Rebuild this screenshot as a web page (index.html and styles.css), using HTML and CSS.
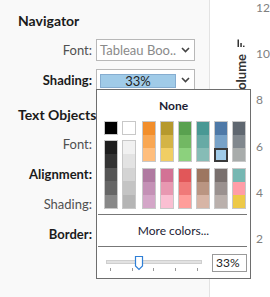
FILE: index.html
```html
<!DOCTYPE html>
<html lang="en">
<head>
    <meta charset="UTF-8">
    <title>Format Workbook</title>
    <link rel="stylesheet" href="styles.css">
</head>
<body>
    <div class="screen">
        <!-- Format pane -->
        <aside class="panel">
            <h2 class="heading">Navigator</h2>
            <div class="fields">
                <span class="label">Font:</span>
                <div class="select">
                    <span class="select-text">Tableau Boo..</span>
                    <svg class="chevron" width="9" height="6" viewBox="0 0 9 6"><polyline points="1,1 4.5,4.5 8,1" fill="none" stroke="#444" stroke-width="1.6"/></svg>
                </div>

                <span class="label strong">Shading:</span>
                <div class="select shading-select">
                    <span class="shade-bar">33%</span>
                    <svg class="chevron" width="9" height="6" viewBox="0 0 9 6"><polyline points="1,1 4.5,4.5 8,1" fill="none" stroke="#444" stroke-width="1.6"/></svg>

                    <!-- Color picker popup -->
                    <div class="color-popup">
                        <div class="none-option">None</div>

                        <div class="swatches">
                            <div class="gray-col">
                                <div class="swatch-single" style="background:#000"></div>
                                <div class="stack gray-stack">
                                    <div style="background:#1e1e1e"></div>
                                    <div style="background:#333"></div>
                                    <div style="background:#555"></div>
                                    <div style="background:#666"></div>
                                    <div style="background:#888"></div>
                                </div>
                            </div>
                            <div class="gray-col">
                                <div class="swatch-single" style="background:#fff"></div>
                                <div class="stack gray-stack">
                                    <div style="background:#f1f1f1"></div>
                                    <div style="background:#e3e3e3"></div>
                                    <div style="background:#d4d4d4"></div>
                                    <div style="background:#c4c4c4"></div>
                                    <div style="background:#b5b5b5"></div>
                                </div>
                            </div>

                            <div class="color-grid">
                                <div class="stack"><div style="background:#f28e2b"></div><div style="background:#f9a753"></div><div style="background:#ffbe7d"></div></div>
                                <div class="stack"><div style="background:#b6992d"></div><div style="background:#d4b446"></div><div style="background:#f1ce63"></div></div>
                                <div class="stack"><div style="background:#59a14f"></div><div style="background:#72b863"></div><div style="background:#8cd17d"></div></div>
                                <div class="stack"><div style="background:#499894"></div><div style="background:#67aaa5"></div><div style="background:#86bcb6"></div></div>
                                <div class="stack"><div style="background:#4e79a7"></div><div style="background:#77a2c8"></div><div class="selected" style="background:#a0cbe8"></div></div>
                                <div class="stack"><div style="background:#5f6770"></div><div style="background:#81888e"></div><div style="background:#a8acab"></div></div>

                                <div class="stack"><div style="background:#b07aa1"></div><div style="background:#c491b6"></div><div style="background:#d4a6c8"></div></div>
                                <div class="stack"><div style="background:#d37295"></div><div style="background:#e898b1"></div><div style="background:#fabfd2"></div></div>
                                <div class="stack"><div style="background:#e15759"></div><div style="background:#f07a79"></div><div style="background:#ff9d9a"></div></div>
                                <div class="stack"><div style="background:#9d7660"></div><div style="background:#ba9582"></div><div style="background:#d7b5a6"></div></div>
                                <div class="stack"><div style="background:#79706e"></div><div style="background:#9a918f"></div><div style="background:#bab0ac"></div></div>
                                <div class="stack"><div style="background:#76b7b2"></div><div style="background:#ff9da7"></div><div style="background:#edc948"></div></div>
                            </div>
                        </div>

                        <div class="divider"></div>
                        <div class="more-colors">More colors...</div>
                        <div class="divider"></div>

                        <div class="opacity-row">
                            <svg class="slider" width="98" height="18" viewBox="0 0 98 18">
                                <rect x="0.5" y="5.5" width="95" height="3" fill="#e2e2e2" stroke="#cfcfcf"/>
                                <g stroke="#999" stroke-width="1">
                                    <line x1="4.5" y1="13" x2="4.5" y2="16"/>
                                    <line x1="26.5" y1="13" x2="26.5" y2="16"/>
                                    <line x1="47.5" y1="13" x2="47.5" y2="16"/>
                                    <line x1="69.5" y1="13" x2="69.5" y2="16"/>
                                    <line x1="91.5" y1="13" x2="91.5" y2="16"/>
                                </g>
                                <path d="M29.5 1.5 H36.5 V11 L33 14.5 L29.5 11 Z" fill="#fff" stroke="#2f7fd6" stroke-width="1.2"/>
                            </svg>
                            <div class="percent-box">33%</div>
                        </div>
                    </div>
                </div>
            </div>

            <h2 class="heading section">Text Objects</h2>
            <div class="fields">
                <span class="label">Font:</span>
                <div class="blank"></div>
                <span class="label strong">Alignment:</span>
                <div class="blank"></div>
                <span class="label">Shading:</span>
                <div class="blank"></div>
                <span class="label strong">Border:</span>
                <div class="blank"></div>
            </div>
        </aside>

        <!-- Chart axis -->
        <section class="chart">
            <div class="axis-title">
                <svg width="8" height="8" viewBox="0 0 8 8">
                    <rect x="0.5" y="0.5" width="1.5" height="7.5" fill="#333"/>
                    <rect x="3.3" y="4" width="1.5" height="4" fill="#333"/>
                    <rect x="6" y="6.6" width="1.5" height="1.4" fill="#333"/>
                </svg>
                <span class="axis-title-text">Volume</span>
            </div>
            <div class="axis-ticks">
                <div>12</div>
                <div>10</div>
                <div>8</div>
                <div>6</div>
                <div>4</div>
                <div>2</div>
            </div>
        </section>
    </div>
</body>
</html>
```

FILE: styles.css
```css
* {
    margin: 0;
    padding: 0;
    box-sizing: border-box;
}

html, body {
    height: 100%;
    overflow: hidden;
    font-family: "Lato", "Liberation Sans", sans-serif;
    background: #fff;
    color: #222;
}

.screen {
    display: flex;
    height: 100vh;
}

/* Format pane */
.panel {
    width: 210px;
    flex: none;
    background: #f9f9f9;
    border-right: 1px solid #e3e3e3;
    padding-top: 12px;
}

.heading {
    font-size: 14px;
    font-weight: bold;
    line-height: 18px;
    padding-left: 18px;
    color: #1b1b1b;
}

.heading.section {
    margin-top: 15px;
}

.fields {
    display: grid;
    grid-template-columns: 92px 99px;
    column-gap: 4px;
    row-gap: 8px;
    margin-top: 9px;
}

.label {
    text-align: right;
    font-size: 13px;
    line-height: 22px;
    color: #505050;
}

.label.strong {
    font-weight: bold;
    color: #1b1b1b;
}

.blank {
    height: 22px;
}

.select {
    position: relative;
    height: 22px;
    display: flex;
    align-items: center;
    justify-content: space-between;
    padding: 0 4px 0 3px;
    background: #fff;
    border: 1px solid #b8b8b8;
}

.select-text {
    font-size: 13px;
    color: #8a8a8a;
    white-space: nowrap;
}

.chevron {
    flex: none;
}

.shade-bar {
    width: 76px;
    height: 14px;
    margin-top: 2px;
    background: #a0cbe8;
    border: 1px solid #86add0;
    font-size: 13px;
    line-height: 12px;
    text-align: center;
    color: #222;
}

/* Color picker popup */
.color-popup {
    position: absolute;
    top: 19px;
    left: -1px;
    width: 155px;
    z-index: 10;
    background: #fff;
    border: 1px solid #6e6e6e;
}

.none-option {
    height: 31px;
    line-height: 31px;
    text-align: center;
    font-size: 12px;
    font-weight: bold;
    color: #1c1c34;
}

.swatches {
    display: flex;
    gap: 4px;
    padding-left: 7px;
}

.gray-col {
    display: flex;
    flex-direction: column;
    gap: 5px;
    width: 14px;
}

.swatch-single {
    height: 14px;
    border: 1px solid #c8c8c8;
}

.color-grid {
    display: grid;
    grid-template-columns: repeat(6, 14px);
    column-gap: 4px;
    row-gap: 6px;
    margin-left: 2px;
}

.stack {
    display: flex;
    flex-direction: column;
    height: 41px;
    border: 1px solid #c8c8c8;
}

.stack > div {
    flex: 1;
}

.gray-stack {
    height: 69px;
}

.stack > .selected {
    flex: none;
    height: 14px;
    margin: 0 -1px -1px;
    border: 2px solid #3a3a3a;
}

.divider {
    height: 1px;
    margin: 5px 3px 0 1px;
    background: #777;
}

.more-colors + .divider {
    margin-top: 0;
}

.more-colors {
    height: 31px;
    line-height: 31px;
    text-align: center;
    font-size: 12px;
    color: #1c1c34;
}

.opacity-row {
    height: 31px;
    display: flex;
    align-items: center;
    gap: 8px;
    padding-left: 9px;
}

.slider {
    flex: none;
    margin-top: 3px;
}

.percent-box {
    width: 35px;
    height: 18px;
    border: 1px solid #9a9a9a;
    font-size: 12px;
    line-height: 16px;
    padding-left: 3px;
    color: #222;
}

/* Chart axis */
.chart {
    flex: 1;
    display: flex;
    padding-left: 25px;
    gap: 9px;
}

.axis-title {
    width: 12px;
    display: flex;
    flex-direction: column;
    align-items: center;
    gap: 7px;
    padding-top: 39px;
}

.axis-title-text {
    writing-mode: vertical-rl;
    transform: rotate(180deg);
    font-size: 13px;
    font-weight: bold;
    color: #333;
}

.axis-ticks div {
    height: 46.2px;
    font-size: 12px;
    line-height: 16px;
    color: #808080;
}
```
